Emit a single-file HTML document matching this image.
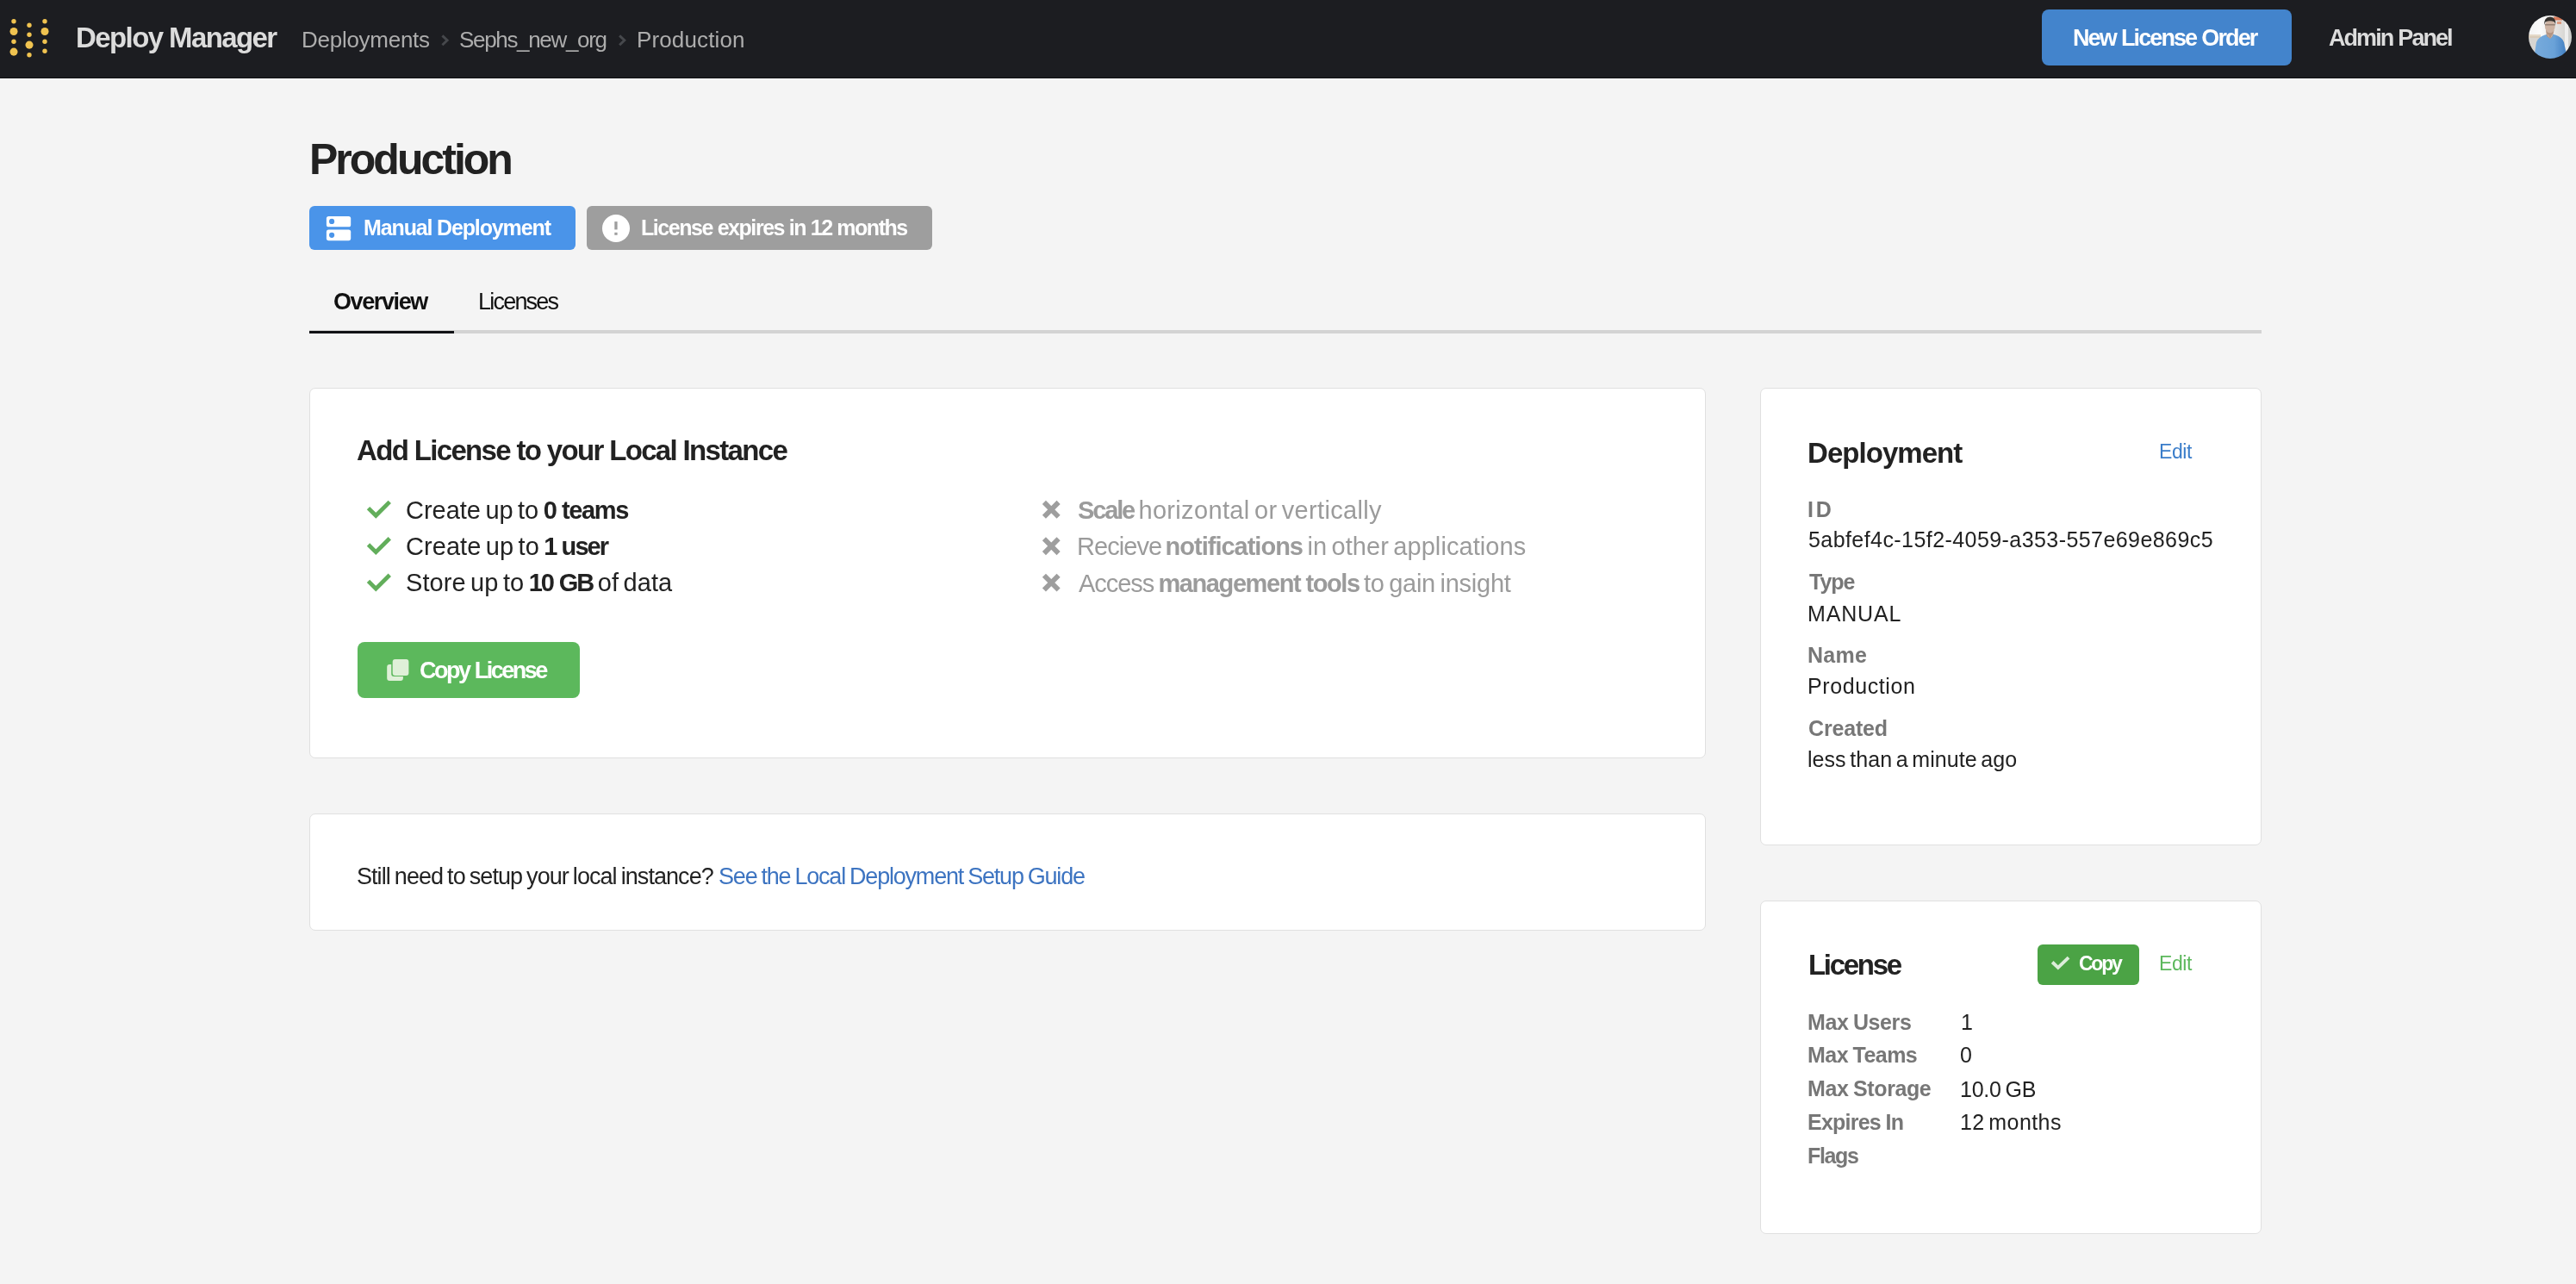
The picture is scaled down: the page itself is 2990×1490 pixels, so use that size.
<!DOCTYPE html>
<html><head><meta charset="utf-8"><title>Deploy Manager</title><style>
html,body{margin:0;padding:0;width:2990px;height:1490px;overflow:hidden;background:#f4f4f4;font-family:"Liberation Sans",sans-serif;}
.a{position:absolute;display:block}
.t{position:absolute;white-space:nowrap;font-family:"Liberation Sans",sans-serif;will-change:transform}
b{font-weight:700}
</style></head><body>
<div class="a" style="left:0;top:0;width:2990px;height:90px;background:#1c1d21"></div>
<div class="a" style="left:0;top:90px;width:2990px;height:1px;background:#0e0f12"></div>
<div class="a" style="left:0;top:91px;width:2990px;height:1px;background:#ffffff"></div>
<svg class="a" style="left:0;top:0" width="80" height="90" fill="#f0c350"><circle cx="16" cy="24.8" r="2.7"/><circle cx="16" cy="36.5" r="4.55"/><circle cx="16" cy="48.2" r="2.7"/><circle cx="16" cy="60.1" r="4.55"/><circle cx="34" cy="29.3" r="2.7"/><circle cx="34" cy="40.2" r="2.7"/><circle cx="34" cy="52.1" r="4.55"/><circle cx="34" cy="63.8" r="2.7"/><circle cx="52" cy="24.8" r="2.7"/><circle cx="52" cy="36.5" r="4.55"/><circle cx="52" cy="48.2" r="2.7"/><circle cx="52" cy="59.2" r="2.7"/></svg>
<svg class="a" style="left:0;top:0" width="900" height="90"><path d="M513.4 41.4 L519.1 46.8 L513.4 52.2" fill="none" stroke="#46484c" stroke-width="2.9"/></svg>
<svg class="a" style="left:0;top:0" width="900" height="90"><path d="M719.0999999999999 41.4 L724.8 46.8 L719.0999999999999 52.2" fill="none" stroke="#46484c" stroke-width="2.9"/></svg>
<div class="a" style="left:2370px;top:11px;width:290px;height:65px;background:#4384cc;border-radius:8px"></div>
<svg class="a" style="left:2935px;top:18px" width="50" height="50" viewBox="0 0 50 50">
<defs><clipPath id="av"><circle cx="25" cy="25" r="25"/></clipPath>
<linearGradient id="avbg" x1="0" x2="1" y1="0" y2="0"><stop offset="0" stop-color="#f2f2f2"/><stop offset="0.3" stop-color="#fbfbfb"/><stop offset="0.62" stop-color="#e6e4e2"/><stop offset="1" stop-color="#c9cac8"/></linearGradient>
<filter id="avb" x="-10%" y="-10%" width="120%" height="120%"><feGaussianBlur stdDeviation="0.7"/></filter><linearGradient id="avsh" x1="0" x2="1" y1="0" y2="0"><stop offset="0" stop-color="#78abdc"/><stop offset="0.6" stop-color="#6aa2d8"/><stop offset="1" stop-color="#3f7cc0"/></linearGradient></defs>
<g clip-path="url(#av)"><g filter="url(#avb)">
<rect x="-2" y="-2" width="54" height="54" fill="url(#avbg)"/>
<rect x="0" y="24" width="14" height="26" fill="#c9c6c2" opacity="0.7"/>
<rect x="0" y="22" width="14" height="4" fill="#d8c4a8" opacity="0.6"/>
<rect x="42" y="0" width="4" height="50" fill="#f4f4f4" opacity="0.8"/>
<rect x="29" y="1.5" width="10" height="4" fill="#d4572e" opacity="0.75"/>
<rect x="33" y="7" width="5" height="3" fill="#d86a40" opacity="0.6"/>
<path d="M6 50 L9 31 Q11 25 19 22.5 L25 21 L31 22.5 Q39 25 41 31 L45 50 Z" fill="url(#avsh)"/>
<path d="M20 17 L29.5 17 L28 24 L25 27 L21 24 Z" fill="#b39482"/>
<path d="M21 21 L25 27 L23 23 Z M29 21 L25 27 L27 23 Z" fill="#e8eef5" opacity="0.7"/>
<ellipse cx="24.8" cy="12.5" rx="5.9" ry="7.8" fill="#cdb3a3"/>
<path d="M18.2 11 Q17.5 2 25 1.5 Q32 1.8 31.2 10.5 L30 7.5 Q25 5 19.5 7.5 Z" fill="#34302d"/>
<rect x="19" y="10.2" width="12" height="1.2" fill="#5a4c44" opacity="0.6"/>
</g></g></svg>
<div class="a" style="left:359px;top:239px;width:309px;height:51px;background:#4a94e9;border-radius:6px"></div>
<svg class="a" style="left:378px;top:250px" width="30" height="30" viewBox="0 0 30 30">
<rect x="0.9" y="0.9" width="28.3" height="12.4" rx="2.6" fill="#fff"/>
<rect x="0.9" y="16.6" width="28.3" height="12.6" rx="2.6" fill="#fff"/>
<circle cx="7.1" cy="6.9" r="3.1" fill="#4a94e9"/>
<circle cx="7.1" cy="22.8" r="3.1" fill="#4a94e9"/></svg>
<div class="a" style="left:681px;top:239px;width:401px;height:51px;background:#9e9e9e;border-radius:6px"></div>
<svg class="a" style="left:699px;top:249px" width="32" height="32" viewBox="0 0 32 32">
<circle cx="16" cy="16" r="16" fill="#fff"/>
<rect x="14.3" y="8.1" width="3.3" height="9.3" fill="#9e9e9e"/>
<rect x="14.3" y="20.8" width="3.3" height="3" fill="#9e9e9e"/></svg>
<div class="a" style="left:359px;top:383px;width:2266px;height:4px;background:#d3d3d3"></div>
<div class="a" style="left:359px;top:384px;width:168px;height:3px;background:#111215"></div>
<div class="a" style="left:359px;top:450px;width:1619px;height:428px;background:#fff;border:1px solid #e0e0e0;border-radius:7px"></div>
<div class="a" style="left:359px;top:944px;width:1619px;height:134px;background:#fff;border:1px solid #e0e0e0;border-radius:7px"></div>
<div class="a" style="left:2043px;top:450px;width:580px;height:529px;background:#fff;border:1px solid #e0e0e0;border-radius:7px"></div>
<div class="a" style="left:2043px;top:1045px;width:580px;height:385px;background:#fff;border:1px solid #e0e0e0;border-radius:7px"></div>
<svg class="a" style="left:0;top:0" width="500" height="800"><path d="M427.5 589.6 L436.3 598.3 L452.3 582.4" fill="none" stroke="#62ae5b" stroke-width="4.8" stroke-linejoin="miter"/></svg>
<svg class="a" style="left:0;top:0" width="500" height="800"><path d="M427.5 632.0 L436.3 640.6999999999999 L452.3 624.8" fill="none" stroke="#62ae5b" stroke-width="4.8" stroke-linejoin="miter"/></svg>
<svg class="a" style="left:0;top:0" width="500" height="800"><path d="M427.5 674.4 L436.3 683.0999999999999 L452.3 667.1999999999999" fill="none" stroke="#62ae5b" stroke-width="4.8" stroke-linejoin="miter"/></svg>
<svg class="a" style="left:1200px;top:0" width="40" height="800"><path d="M11.900000000000091 582.9 L28.59999999999991 599.7 M28.59999999999991 582.9 L11.900000000000091 599.7" fill="none" stroke="#9e9e9e" stroke-width="5.8"/></svg>
<svg class="a" style="left:1200px;top:0" width="40" height="800"><path d="M11.900000000000091 625.3 L28.59999999999991 642.1 M28.59999999999991 625.3 L11.900000000000091 642.1" fill="none" stroke="#9e9e9e" stroke-width="5.8"/></svg>
<svg class="a" style="left:1200px;top:0" width="40" height="800"><path d="M11.900000000000091 667.6999999999999 L28.59999999999991 684.5 M28.59999999999991 667.6999999999999 L11.900000000000091 684.5" fill="none" stroke="#9e9e9e" stroke-width="5.8"/></svg>
<div class="a" style="left:415px;top:745px;width:258px;height:65px;background:#5cb85c;border-radius:8px"></div>
<svg class="a" style="left:449px;top:764px" width="27" height="27" viewBox="0 0 27 27">
<path d="M3 7.1 H5.2 V18 A3 3 0 0 0 8.2 21 H18.9 V23 A3 3 0 0 1 15.9 26 H3.2 A3 3 0 0 1 0.2 23 V10.1 A3 3 0 0 1 3.2 7.1 Z" fill="#dff0d8"/>
<rect x="6.7" y="0.9" width="18.7" height="19" rx="3" fill="#dff0d8"/></svg>
<div class="a" style="left:2365px;top:1096px;width:118px;height:47px;background:#4ba345;border-radius:6px"></div>
<svg class="a" style="left:2370px;top:1100px" width="40" height="35"><path d="M12.15 16.5 L18.8 22.9 L31.05 11.05" fill="none" stroke="#dcedda" stroke-width="3.9"/></svg>
<div class="t" id="t_brand" style="left:88.00px;top:27.10px;font-weight:700;font-size:33px;line-height:33px;color:#dcdcdc;letter-spacing:-1.588px;word-spacing:-0.08px">Deploy Manager</div>
<div class="t" id="t_bc1" style="left:350.00px;top:33.00px;font-weight:400;font-size:26px;line-height:26px;color:#adadad;letter-spacing:-0.270px;word-spacing:-1.93px">Deployments</div>
<div class="t" id="t_bc2" style="left:533.00px;top:33.00px;font-weight:400;font-size:26px;line-height:26px;color:#adadad;letter-spacing:-1.333px;word-spacing:-0.87px">Sephs_new_org</div>
<div class="t" id="t_bc3" style="left:739.00px;top:33.00px;font-weight:400;font-size:26px;line-height:26px;color:#adadad;letter-spacing:0.137px;word-spacing:-2.34px">Production</div>
<div class="t" id="t_nlo" style="left:2406.00px;top:31.20px;font-weight:700;font-size:27px;line-height:27px;color:#ffffff;letter-spacing:-1.893px;word-spacing:0.49px">New License Order</div>
<div class="t" id="t_admin" style="left:2703.00px;top:31.00px;font-weight:700;font-size:27px;line-height:27px;color:#dcdcdc;letter-spacing:-1.950px;word-spacing:0.55px">Admin Panel</div>
<div class="t" id="t_h1" style="left:359.00px;top:160.00px;font-weight:700;font-size:50px;line-height:50px;color:#222222;letter-spacing:-3.000px;word-spacing:0.37px">Production</div>
<div class="t" id="t_badge1" style="left:422.00px;top:252.00px;font-weight:700;font-size:25px;line-height:25px;color:#ffffff;letter-spacing:-1.125px;word-spacing:-0.19px">Manual Deployment</div>
<div class="t" id="t_badge2" style="left:744.00px;top:252.20px;font-weight:700;font-size:25px;line-height:25px;color:#ffffff;letter-spacing:-1.444px;word-spacing:0.13px">License expires in 12 months</div>
<div class="t" id="t_tab1" style="left:387.00px;top:336.80px;font-weight:700;font-size:27px;line-height:27px;color:#111111;letter-spacing:-1.388px;word-spacing:-0.01px">Overview</div>
<div class="t" id="t_tab2" style="left:555.00px;top:336.80px;font-weight:400;font-size:27px;line-height:27px;color:#111111;letter-spacing:-1.786px;word-spacing:-0.70px">Licenses</div>
<div class="t" id="t_title" style="left:414.00px;top:505.60px;font-weight:700;font-size:33px;line-height:33px;color:#222222;letter-spacing:-1.658px;word-spacing:-0.01px">Add License to your Local Instance</div>
<div class="t" id="t_f1" style="left:471.00px;top:577.60px;font-weight:400;font-size:29px;line-height:29px;color:#222222;letter-spacing:-0.008px;word-spacing:-2.64px">Create up to <b style="letter-spacing:-1.396px;word-spacing:-0.01px">0 teams</b></div>
<div class="t" id="t_f2" style="left:471.00px;top:620.00px;font-weight:400;font-size:29px;line-height:29px;color:#222222;letter-spacing:0.058px;word-spacing:-2.71px">Create up to <b style="letter-spacing:-1.900px;word-spacing:-0.10px">1 user</b></div>
<div class="t" id="t_f3" style="left:471.00px;top:662.40px;font-weight:400;font-size:29px;line-height:29px;color:#222222;letter-spacing:0.072px;word-spacing:-2.72px">Store up to <b style="letter-spacing:-1.909px;word-spacing:0.41px">10 GB</b> of data</div>
<div class="t" id="t_g1" style="left:1251.00px;top:577.80px;font-weight:400;font-size:29px;line-height:29px;color:#9b9b9b;letter-spacing:0.335px;word-spacing:-2.99px"><b style="letter-spacing:-2.157px;word-spacing:0.42px">Scale</b> horizontal or vertically</div>
<div class="t" id="t_g2" style="left:1250.00px;top:620.20px;font-weight:400;font-size:29px;line-height:29px;color:#9b9b9b;letter-spacing:0.063px;word-spacing:-2.72px"><span style="letter-spacing:-0.939px;margin-right:-1.00px">Recieve</span> <b style="letter-spacing:-1.001px;word-spacing:0.66px">notifications</b> in other applications</div>
<div class="t" id="t_g3" style="left:1252.00px;top:662.60px;font-weight:400;font-size:29px;line-height:29px;color:#9b9b9b;letter-spacing:-0.235px;word-spacing:-2.42px"><span style="letter-spacing:-1.067px;margin-right:0.00px">Access</span> <b style="letter-spacing:-1.413px;word-spacing:-0.49px">management tools</b> to gain insight</div>
<div class="t" id="t_copylic" style="left:487.00px;top:764.90px;font-weight:700;font-size:27px;line-height:27px;color:#ffffff;letter-spacing:-2.486px;word-spacing:1.08px">Copy License</div>
<div class="t" id="t_guide1" style="left:414.00px;top:1004.00px;font-weight:400;font-size:27px;line-height:27px;color:#222222;letter-spacing:-0.944px;word-spacing:-1.54px">Still need to setup your local instance?</div>
<div class="t" id="t_guide2" style="left:834.00px;top:1004.00px;font-weight:400;font-size:27px;line-height:27px;color:#3d74c1;letter-spacing:-1.198px;word-spacing:-1.28px">See the Local Deployment Setup Guide</div>
<div class="t" id="t_dep" style="left:2098.00px;top:509.00px;font-weight:700;font-size:33px;line-height:33px;color:#222222;letter-spacing:-0.949px;word-spacing:-0.72px">Deployment</div>
<div class="t" id="t_edit1" style="left:2506.00px;top:512.70px;font-weight:400;font-size:23px;line-height:23px;color:#3a7dca;letter-spacing:-0.432px;word-spacing:-1.71px">Edit</div>
<div class="t" id="t_l_id" style="left:2098.00px;top:578.50px;font-weight:700;font-size:25px;line-height:25px;color:#777777;letter-spacing:2.700px;word-spacing:-4.01px">ID</div>
<div class="t" id="t_v_id" style="left:2099.00px;top:614.20px;font-weight:400;font-size:25px;line-height:25px;color:#222222;letter-spacing:0.429px;word-spacing:-2.74px">5abfef4c-15f2-4059-a353-557e69e869c5</div>
<div class="t" id="t_l_type" style="left:2100.00px;top:663.40px;font-weight:700;font-size:25px;line-height:25px;color:#777777;letter-spacing:-1.039px;word-spacing:-0.27px">Type</div>
<div class="t" id="t_v_type" style="left:2098.00px;top:700.00px;font-weight:400;font-size:25px;line-height:25px;color:#222222;letter-spacing:0.820px;word-spacing:-3.13px">MANUAL</div>
<div class="t" id="t_l_name" style="left:2098.00px;top:747.70px;font-weight:700;font-size:25px;line-height:25px;color:#777777;letter-spacing:0.235px;word-spacing:-1.55px">Name</div>
<div class="t" id="t_v_name" style="left:2098.00px;top:784.00px;font-weight:400;font-size:25px;line-height:25px;color:#222222;letter-spacing:0.594px;word-spacing:-2.91px">Production</div>
<div class="t" id="t_l_created" style="left:2099.00px;top:833.00px;font-weight:700;font-size:25px;line-height:25px;color:#777777;letter-spacing:-0.167px;word-spacing:-1.15px">Created</div>
<div class="t" id="t_v_created" style="left:2098.00px;top:868.70px;font-weight:400;font-size:25px;line-height:25px;color:#222222;letter-spacing:0.046px;word-spacing:-2.36px">less than a minute ago</div>
<div class="t" id="t_lic" style="left:2099.00px;top:1103.30px;font-weight:700;font-size:33px;line-height:33px;color:#222222;letter-spacing:-2.297px;word-spacing:0.63px">License</div>
<div class="t" id="t_copy" style="left:2413.00px;top:1107.00px;font-weight:700;font-size:23px;line-height:23px;color:#ffffff;letter-spacing:-2.235px;word-spacing:1.01px">Copy</div>
<div class="t" id="t_edit2" style="left:2506.00px;top:1107.00px;font-weight:400;font-size:23px;line-height:23px;color:#5cb85c;letter-spacing:-0.432px;word-spacing:-1.71px">Edit</div>
<div class="t" id="t_l_mu" style="left:2098.00px;top:1173.50px;font-weight:700;font-size:25px;line-height:25px;color:#777777;letter-spacing:-0.425px;word-spacing:-0.89px">Max Users</div>
<div class="t" id="t_l_mt" style="left:2098.00px;top:1212.10px;font-weight:700;font-size:25px;line-height:25px;color:#777777;letter-spacing:-0.550px;word-spacing:-0.76px">Max Teams</div>
<div class="t" id="t_l_ms" style="left:2098.00px;top:1251.30px;font-weight:700;font-size:25px;line-height:25px;color:#777777;letter-spacing:-0.400px;word-spacing:-0.91px">Max Storage</div>
<div class="t" id="t_l_ei" style="left:2098.00px;top:1290.20px;font-weight:700;font-size:25px;line-height:25px;color:#777777;letter-spacing:-0.778px;word-spacing:-0.53px">Expires In</div>
<div class="t" id="t_l_fl" style="left:2098.00px;top:1329.40px;font-weight:700;font-size:25px;line-height:25px;color:#777777;letter-spacing:-1.350px;word-spacing:0.04px">Flags</div>
<div class="t" id="t_v_mu" style="left:2276.00px;top:1173.80px;font-weight:400;font-size:25px;line-height:25px;color:#222222;letter-spacing:0.000px;word-spacing:-2.31px">1</div>
<div class="t" id="t_v_mt" style="left:2275.00px;top:1212.40px;font-weight:400;font-size:25px;line-height:25px;color:#222222;letter-spacing:0.000px;word-spacing:-2.31px">0</div>
<div class="t" id="t_v_ms" style="left:2275.00px;top:1251.50px;font-weight:400;font-size:25px;line-height:25px;color:#222222;letter-spacing:-0.219px;word-spacing:-2.09px">10.0 GB</div>
<div class="t" id="t_v_ei" style="left:2275.00px;top:1290.40px;font-weight:400;font-size:25px;line-height:25px;color:#222222;letter-spacing:0.428px;word-spacing:-2.74px">12 months</div>
</body></html>
